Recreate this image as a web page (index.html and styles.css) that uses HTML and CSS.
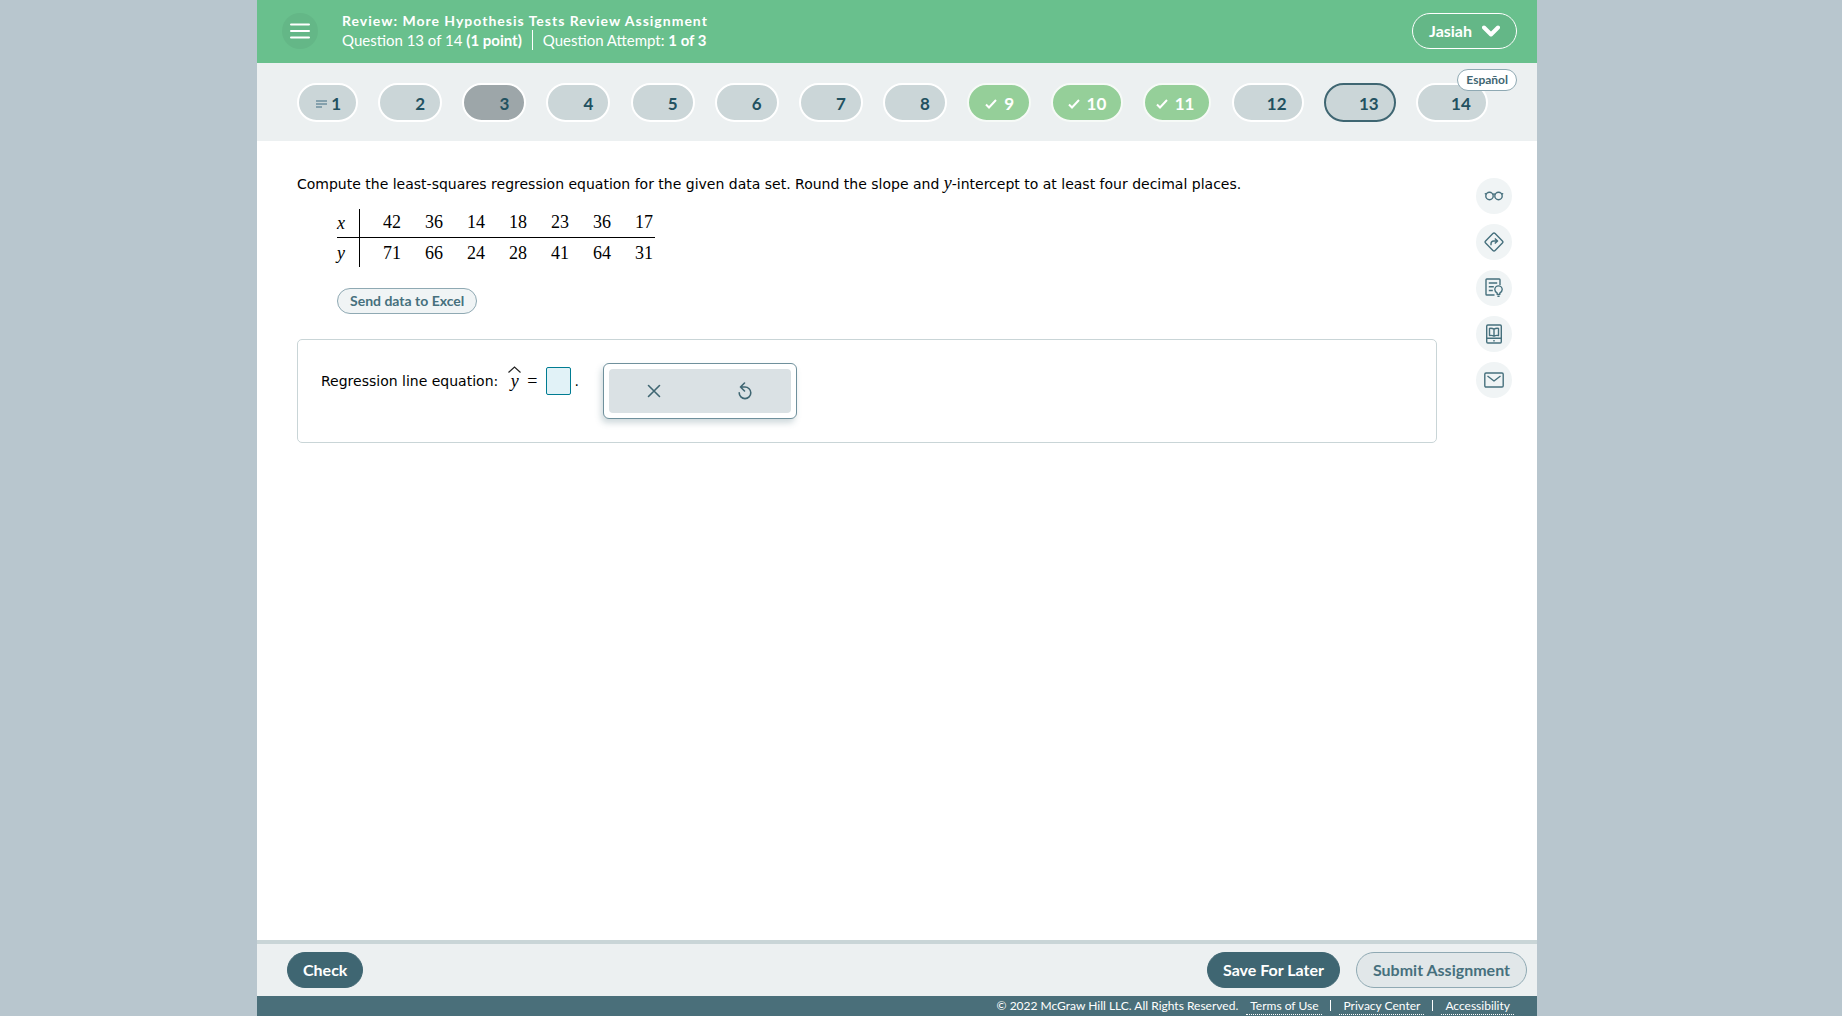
FILE: index.html
```
<!DOCTYPE html>
<html lang="en">
<head>
    <meta charset="UTF-8">
    <meta name="viewport" content="width=device-width, initial-scale=1.0">
    <title>Review: More Hypothesis Tests Review Assignment</title>
    <link rel="stylesheet" href="styles.css">
</head>
<body>
    <div class="app">
        <header class="header">
            <button class="menu-button" aria-label="Menu">
                <svg width="20" height="16" viewBox="0 0 20 16" fill="none" stroke="currentColor" stroke-width="2" stroke-linecap="round">
                    <path d="M1 1.5h18M1 8h18M1 14.5h18"/>
                </svg>
            </button>
            <div class="heading">
                <h1>Review: More Hypothesis Tests Review Assignment</h1>
                <div class="progress">
                    <span>Question 13 of 14 <b>(1 point)</b></span>
                    <span class="attempt">Question Attempt: <b>1 of 3</b></span>
                </div>
            </div>
            <button class="user-button">
                Jasiah
                <svg width="18" height="12" viewBox="0 0 18 12" fill="none" stroke="currentColor" stroke-width="4" stroke-linecap="round" stroke-linejoin="round">
                    <path d="M2 2.5l7 7 7-7"/>
                </svg>
            </button>
        </header>

        <nav class="questions" aria-label="Questions">
            <button class="pill first">
                <svg width="11" height="8" viewBox="0 0 11 8" fill="none" stroke="#6f909e" stroke-width="1.6">
                    <path d="M0 1h11M0 4h11M0 7h6"/>
                </svg>
                1
            </button>
            <button class="pill">2</button>
            <button class="pill visited">3</button>
            <button class="pill">4</button>
            <button class="pill">5</button>
            <button class="pill">6</button>
            <button class="pill">7</button>
            <button class="pill">8</button>
            <button class="pill done">
                <svg class="check" width="12" height="10" viewBox="0 0 12 10"><path d="M1 5.500l3 3L11 1"/></svg>
                9
            </button>
            <button class="pill wide done">
                <svg class="check" width="12" height="10" viewBox="0 0 12 10"><path d="M1 5.500l3 3L11 1"/></svg>
                10
            </button>
            <button class="pill eleven done">
                <svg class="check" width="12" height="10" viewBox="0 0 12 10"><path d="M1 5.500l3 3L11 1"/></svg>
                11
            </button>
            <button class="pill wide">12</button>
            <button class="pill wide current" aria-current="true">13</button>
            <button class="pill wide">14</button>
            <button class="language">Español</button>
        </nav>

        <div class="content">
            <main class="question">
                <p class="prompt">Compute the least-squares regression equation for the given data set. Round the slope and <i>y</i>-intercept to at least four decimal places.</p>
                <table class="data">
                    <tr><th>x</th><td>42</td><td>36</td><td>14</td><td>18</td><td>23</td><td>36</td><td>17</td></tr>
                    <tr><th>y</th><td>71</td><td>66</td><td>24</td><td>28</td><td>41</td><td>64</td><td>31</td></tr>
                </table>
                <button class="excel">Send data to Excel</button>
                <section class="answer">
                    <div class="equation">
                        <label for="equation">Regression line equation:</label>
                        <span class="yhat">
                            <svg width="13" height="7" viewBox="0 0 13 7" fill="none" stroke="#222" stroke-width="1.2"><path d="M.5 6.5l6-5.5 6 5.5"/></svg>
                            <i>y</i>
                        </span>
                        <span class="equals">=</span>
                        <input id="equation" type="text">
                        <span>.</span>
                    </div>
                    <div class="palette">
                        <button aria-label="Clear">
                            <svg width="14" height="14" viewBox="0 0 14 14"><path d="M1.5 1.5l11 11M12.5 1.5l-11 11"/></svg>
                        </button>
                        <button aria-label="Undo">
                            <svg width="14" height="18" viewBox="0 0 14 18"><path d="M1.2 10.8A5.8 5.8 0 1 0 7 5H2.5M6.5 1l-4 4 4 4"/></svg>
                        </button>
                    </div>
                </section>
            </main>

            <aside class="tools">
                <button aria-label="Reading view">
                    <svg width="20" height="20" viewBox="0 0 20 20"><circle cx="5.5" cy="10" r="3.7"/><circle cx="14.5" cy="10" r="3.7"/><path d="M8.6 8.4q1.4-1 2.8 0M.8 8.2l1.8-.8M19.2 8.2l-1.8-.8"/></svg>
                </button>
                <button aria-label="Directions">
                    <svg width="20" height="20" viewBox="0 0 20 20"><path d="M8.9 1.6q1.1-1.1 2.2 0l7.3 7.3q1.1 1.1 0 2.2l-7.3 7.3q-1.1 1.1-2.2 0l-7.3-7.3q-1.1-1.1 0-2.2z"/><path d="M7 13.2v-1.4q0-2.8 2.8-2.8h3M10.8 6.4l2.8 2.6-2.8 2.6"/></svg>
                </button>
                <button aria-label="Explanation">
                    <svg width="20" height="20" viewBox="0 0 20 20"><path d="M10.5 17H2.8q-.8 0-.8-.8V1.8q0-.8.8-.8h12.4q.8 0 .8.8V7M4.8 5h8.4M4.8 8.8h5M4.8 12.5h4M13.2 16.4v-1.2q-2.4-1.5-2.4-3.6a3.7 3.7 0 0 1 7.4 0q0 2.1-2.4 3.6v1.2zM13.4 18.3h2.2"/></svg>
                </button>
                <button aria-label="eBook">
                    <svg width="20" height="20" viewBox="0 0 20 20"><rect x="2.7" y="1" width="14.6" height="18" rx="1.2"/><path d="M2.7 14.2h14.6M10 5.2q-2.2-1.4-4.5-.8v7.2q2.3-.6 4.5.6 2.2-1.2 4.5-.6V4.4q-2.3-.6-4.5.8zM10 5.2v7M9.3 16.7h1.4"/></svg>
                </button>
                <button aria-label="Message">
                    <svg width="20" height="20" viewBox="0 0 20 20"><rect x=".8" y="3" width="18.4" height="14" rx="1.2"/><path d="M3.5 6l6.5 5L16.5 6"/></svg>
                </button>
            </aside>
        </div>

        <div class="actions">
            <button class="action">Check</button>
            <button class="action save">Save For Later</button>
            <button class="action submit">Submit Assignment</button>
        </div>

        <footer class="footer">
            <span>© 2022 McGraw Hill LLC. All Rights Reserved.</span>
            <a href="#">Terms of Use</a>
            <a href="#">Privacy Center</a>
            <a href="#">Accessibility</a>
        </footer>
    </div>
</body>
</html>
```

FILE: styles.css
```
* {
    box-sizing: border-box;
}

body {
    margin: 0;
    padding: 0 305px 0 257px;
    background-color: #b8c6ce;
    font-family: Lato, sans-serif;
    font-size: 16px;
}

button {
    padding: 0;
    border: none;
    background: none;
    font-family: inherit;
    cursor: pointer;
}

.app {
    display: flex;
    flex-direction: column;
    min-height: 100vh;
    background-color: #ffffff;
}

/* header */

.header {
    display: flex;
    align-items: center;
    height: 63px;
    padding: 0 20px 2px 25px;
    background-color: #69c08d;
    color: #ffffff;
}

.menu-button {
    display: flex;
    justify-content: center;
    align-items: center;
    width: 36px;
    height: 36px;
    border-radius: 50%;
    background-color: #64b787;
    color: #ffffff;
}

.heading {
    flex: 1;
    margin-left: 24px;
}

h1 {
    margin: 0;
    font-size: 14px;
    line-height: 18px;
    letter-spacing: 1px;
}

.progress {
    display: flex;
    font-size: 15px;
    line-height: 20px;
}

.attempt {
    margin-left: 10px;
    padding-left: 10px;
    border-left: 1px solid #ffffff;
}

.user-button {
    display: flex;
    align-items: center;
    gap: 10px;
    height: 36px;
    padding: 0 16px;
    border: 1px solid #ffffff;
    border-radius: 18px;
    background-color: #64b787;
    color: #ffffff;
    font-size: 16px;
    font-weight: bold;
}

/* question numbers */

.questions {
    position: relative;
    display: flex;
    justify-content: space-between;
    height: 78px;
    padding: 20px 49px 0 40px;
    background-color: #ecf0f1;
}

.pill {
    display: flex;
    justify-content: flex-end;
    align-items: center;
    gap: 7px;
    width: 64px;
    height: 39px;
    padding: 2px 15px 0 0;
    border: 2px solid #ffffff;
    border-radius: 20px;
    background-color: #cbd6d8;
    color: #225160;
    font-size: 17px;
    font-weight: bold;
}

.pill.first {
    gap: 4px;
    width: 61px;
}

.pill.wide {
    width: 72px;
}

.pill.eleven {
    width: 68px;
}

.pill.visited {
    background-color: #9da6a9;
}

.pill.done {
    border-color: #f6faf7;
    background-color: #95cf99;
    color: #ffffff;
}

.pill.current {
    border-color: #3f6672;
}

.check {
    fill: none;
    stroke: currentColor;
    stroke-width: 2;
}

.language {
    position: absolute;
    top: 6px;
    right: 20px;
    height: 22px;
    padding: 0 8px 2px;
    border: 1px solid #8fa9b3;
    border-radius: 11px;
    background-color: #ffffff;
    color: #3f6672;
    font-size: 12px;
    font-weight: bold;
}

/* question */

.content {
    display: flex;
    flex: 1;
    padding: 32px 25px 20px 40px;
}

.question {
    flex: 1;
    font-family: Verdana, "DejaVu Sans", sans-serif;
    font-size: 14px;
}

.question i,
.data {
    font-family: "Liberation Serif", serif;
    font-size: 18px;
}

.prompt {
    margin: 0 0 15px;
    line-height: 20px;
}

.data {
    margin-left: 40px;
    border-collapse: collapse;
}

.data th {
    width: 22px;
    padding: 2px 0 0;
    border-right: 1px solid #000000;
    font-weight: normal;
    font-style: italic;
    text-align: left;
}

.data td {
    width: 42px;
    height: 28px;
    padding: 0 2px 0 0;
    text-align: right;
}

.data td:nth-child(2) {
    width: 44px;
}

.data tr:first-child {
    border-bottom: 1px solid #000000;
}

.data tr:last-child td {
    height: 30px;
    padding-top: 2px;
}

.excel {
    display: block;
    height: 26px;
    margin: 21px 0 25px 40px;
    padding: 0 12px 2px;
    border: 1px solid #8fa9b3;
    border-radius: 13px;
    background-color: #f0f4f5;
    color: #46707d;
    font-family: Lato, sans-serif;
    font-size: 14px;
    font-weight: bold;
}

.answer {
    display: flex;
    gap: 24px;
    align-items: flex-start;
    padding: 23px;
    border: 1px solid #c9d5d7;
    border-radius: 5px;
}

.equation {
    display: flex;
    align-items: center;
    height: 36px;
}

.yhat {
    display: flex;
    flex-direction: column;
    align-items: center;
    margin: 0 6px 0 10px;
    padding-bottom: 8px;
    line-height: 16px;
}

.equals {
    margin-right: 9px;
    font-family: "Liberation Serif", serif;
    font-size: 18px;
}

.equation input {
    width: 25px;
    height: 28px;
    margin-right: 3px;
    border: 1px solid #007c92;
    border-radius: 2px;
    background-color: #e1f2f7;
}

.palette {
    display: flex;
    width: 194px;
    height: 56px;
    padding: 5px;
    border: 1px solid #6f909c;
    border-radius: 6px;
    background-color: #ffffff;
    box-shadow: -2px 4px 6px rgba(63, 102, 114, 0.25);
}

.palette button {
    flex: 1;
    display: flex;
    justify-content: center;
    align-items: center;
    background-color: #dae1e4;
}

.palette button:first-child {
    border-radius: 4px 0 0 4px;
}

.palette button:last-child {
    border-radius: 0 4px 4px 0;
}

.palette svg {
    fill: none;
    stroke: #3f6672;
    stroke-width: 1.6;
    stroke-linecap: round;
    stroke-linejoin: round;
}

.tools {
    display: flex;
    flex-direction: column;
    gap: 10px;
    margin: 5px 0 0 39px;
}

.tools button {
    display: flex;
    justify-content: center;
    align-items: center;
    width: 36px;
    height: 36px;
    border-radius: 50%;
    background-color: #f0f4f5;
}

.tools svg {
    fill: none;
    stroke: #46707d;
    stroke-width: 1.4;
    stroke-linejoin: round;
}

/* bottom bar */

.actions {
    display: flex;
    gap: 16px;
    padding: 8px 10px 8px 30px;
    border-top: 4px solid #c9d5d7;
    background-color: #ecf0f1;
}

.action {
    height: 36px;
    padding: 0 15px 2px;
    border: 1px solid #3f6672;
    border-radius: 18px;
    background-color: #3f6672;
    color: #ffffff;
    font-size: 16px;
    font-weight: bold;
}

.save {
    margin-left: auto;
}

.submit {
    padding: 0 16px 2px;
    border-color: #8fa9b3;
    background-color: #e1e7e9;
    color: #46707d;
}

.footer {
    display: flex;
    justify-content: flex-end;
    height: 20px;
    padding-right: 23px;
    background-color: #4a6f7a;
    color: #ffffff;
    font-size: 12px;
    line-height: 20px;
}

.footer a {
    position: relative;
    height: 19px;
    margin-left: 8px;
    padding: 0 4px;
    border-bottom: 1px dotted #ffffff;
    color: #ffffff;
    text-decoration: none;
}

.footer a + a {
    margin-left: 17px;
}

.footer a + a::before {
    content: "";
    position: absolute;
    top: 4px;
    left: -9px;
    height: 11px;
    border-left: 1px solid #ffffff;
}
```
